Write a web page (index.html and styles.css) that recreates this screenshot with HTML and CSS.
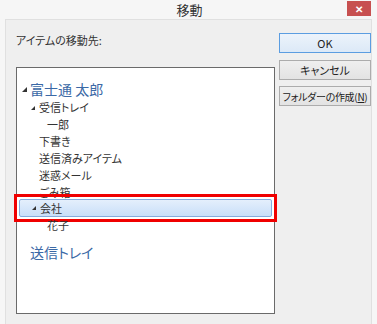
FILE: index.html
```html
<!DOCTYPE html>
<html lang="ja">
<head>
    <meta charset="utf-8" />
    <title>移動</title>
    <link rel="stylesheet" href="styles.css">
</head>
<body>
    <div class="window">
        <div class="titlebar">
            <span class="title">移動</span>
            <span class="close">✕</span>
        </div>
        <div class="client">
            <div class="main">
                <div class="label">アイテムの移動先:</div>
                <div class="tree">
                    <div class="row head"><span class="tri"></span>富士通 太郎</div>
                    <div class="row lv1"><span class="tri small"></span>受信トレイ</div>
                    <div class="row lv2">一郎</div>
                    <div class="row lv1 leaf">下書き</div>
                    <div class="row lv1 leaf">送信済みアイテム</div>
                    <div class="row lv1 leaf">迷惑メール</div>
                    <div class="row lv1 leaf">ごみ箱</div>
                    <div class="row lv1 selected"><span class="tri small"></span>会社<span class="mark"></span></div>
                    <div class="row lv2">花子</div>
                    <div class="row head outbox">送信トレイ</div>
                </div>
            </div>
            <div class="buttons">
                <button class="btn default">OK</button>
                <button class="btn">キャンセル</button>
                <button class="btn tight">フォルダーの作成(<u>N</u>)</button>
            </div>
        </div>
    </div>
</body>
</html>
```

FILE: styles.css
```css
body {
    margin: 0;
    font-family: "Noto Sans CJK JP", "Noto Sans", sans-serif;
    font-feature-settings: "palt";
    color: #333;
}
.window {
    width: 377px;
    height: 324px;
    box-sizing: border-box;
    background: #f6f6f6;
    padding: 0 5px 5px 5px;
    display: flex;
    flex-direction: column;
}
.titlebar {
    height: 23px;
    position: relative;
    display: flex;
    align-items: center;
    justify-content: center;
}
.title {
    font-size: 13px;
    color: #333;
    margin-left: 2px;
}
.close {
    position: absolute;
    right: 1px;
    top: 1px;
    width: 24px;
    height: 15px;
    background: #c75050;
    color: #fff;
    font-size: 10px;
    font-weight: bold;
    display: flex;
    align-items: center;
    justify-content: center;
}
.client {
    flex: 1;
    background: #efefef;
    border: 1px solid #e0e0e0;
    display: flex;
    padding: 13px 0 10px 10px;
}
.main {
    display: flex;
    flex-direction: column;
}
.label {
    font-size: 11px;
    height: 15px;
    line-height: 15px;
    margin-bottom: 19px;
}
.tree {
    width: 257px;
    height: 233px;
    background: #fff;
    border: 1px solid #6a6a6a;
    padding-top: 12px;
    box-sizing: content-box;
    display: flex;
    flex-direction: column;
}
.row {
    height: 17px;
    line-height: 17px;
    font-size: 11px;
    display: flex;
    align-items: center;
    position: relative;
    white-space: nowrap;
}
.row.head {
    height: 19px;
    font-size: 14px;
    color: #3b69a6;
    padding-left: 5px;
}
.row.head .tri {
    margin-right: 3px;
}
.row.outbox {
    height: 20px;
    margin-top: 8px;
    padding-left: 13px;
}
.row.lv1 {
    padding-left: 14px;
}
.row.lv1.leaf {
    padding-left: 22px;
}
.row.lv2 {
    padding-left: 30px;
}
.tri {
    width: 0;
    height: 0;
    border-left: 5px solid transparent;
    border-bottom: 5px solid #333;
    margin-right: 4px;
}
.tri.small {
    border-left-width: 4px;
    border-bottom-width: 4px;
}
.row.selected {
    height: 18px;
    margin: -2px 2px 0 2px;
    padding-left: 12px;
    background: linear-gradient(#e4effc, #c9dff9);
    border: 1px solid #84acdd;
    border-radius: 2px;
    box-sizing: border-box;
}
.mark {
    position: absolute;
    left: -6px;
    right: -6px;
    top: -6px;
    bottom: -6px;
    border: 3px solid #f00000;
}
.buttons {
    display: flex;
    flex-direction: column;
    margin-left: 4px;
    padding-top: 0;
}
.btn {
    width: 92px;
    height: 20px;
    margin-bottom: 6px;
    font-family: inherit;
    font-feature-settings: "palt";
    font-size: 11px;
    color: #222;
    background: linear-gradient(#efefef, #e3e3e3);
    border: 1px solid #acacac;
    padding: 0;
    white-space: nowrap;
}
.btn.tight {
    font-size: 10px;
    letter-spacing: -0.3px;
}
.btn.default {
    border-color: #5b9de1;
    background: linear-gradient(#ecf3fb, #dce9f7);
    margin-bottom: 7px;
}
```
